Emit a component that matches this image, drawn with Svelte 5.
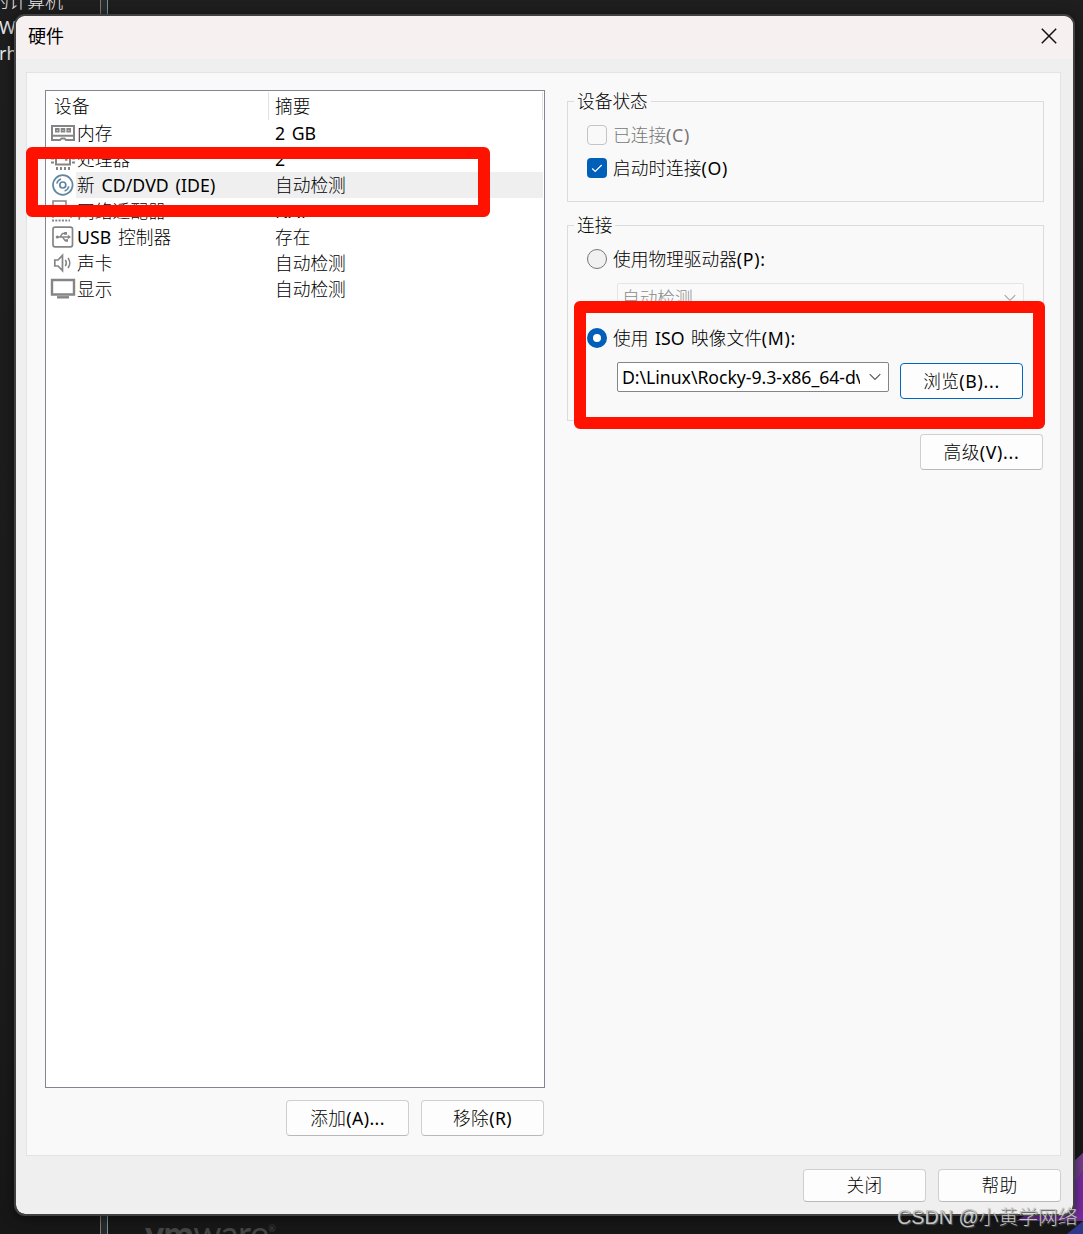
<script>
	const devices = [
		{ icon: 'memory', name: '内存', summary: '2 GB' },
		{ icon: 'cpu', name: '处理器', summary: '2' },
		{ icon: 'disc', name: '新 CD/DVD (IDE)', summary: '自动检测' },
		{ icon: 'network', name: '网络适配器', summary: 'NAT' },
		{ icon: 'usb', name: 'USB 控制器', summary: '存在' },
		{ icon: 'sound', name: '声卡', summary: '自动检测' },
		{ icon: 'display', name: '显示', summary: '自动检测' }
	];

	let selected = 2;
	let connected = false;
	let connectAtStart = true;
	let source = 'iso';
	let isoPath = 'D:\\Linux\\Rocky-9.3-x86_64-dvd.iso';
</script>

<div class="desktop">
	<div class="tree">
		<div>的计算机</div>
		<div>W</div>
		<div>rh</div>
	</div>
	<div class="splitter"></div>
	<svg class="wallpaper" width="67" height="84" viewBox="0 0 67 84">
		<path d="M57 12 67 3V71H0L11 64H57z" fill="#742ca0" />
		<path d="M57 12 67 3V20L57 34z" fill="#713f8c" />
		<path d="M51 84 67 71V84z" fill="#30388b" />
	</svg>
	<div class="brand"><b>vm</b>ware<sup>®</sup></div>

	<div class="dialog">
		<header>
			<span>硬件</span>
			<svg width="16" height="16" viewBox="0 0 16 16">
				<path d="M.8.8 15.2 15.2M15.2.8.8 15.2" stroke="#111" stroke-width="1.5" fill="none" />
			</svg>
		</header>

		<div class="panel">
			<div class="left">
				<div class="list">
					<div class="row head">
						<span class="name">设备</span>
						<span class="summary">摘要</span>
					</div>
					{#each devices as device, index (index)}
						<div class="row" class:selected={index === selected} on:click={() => (selected = index)} role="presentation">
							<svg class="icon" width="26" height="26" viewBox="0 0 26 26" fill="none" stroke="#858585" stroke-width="1.5">
								{#if device.icon === 'memory'}
									<path d="M2 5.9H24V20.1H16L14.5 18.4H11.5L10 20.1H2zM2 15.8H24" stroke-width="2" />
									<path d="M5.9 9h2.8v2.6h-2.8zM11.6 9h2.8v2.6h-2.8zM17.3 9h2.8v2.6h-2.8z" stroke-width="1.8" />
								{:else if device.icon === 'cpu'}
									<path d="M6 4H20V18.5H6z" stroke-width="2" />
									<path d="M1 8.5H4M1 12.5H4M1 16.5H4M22 8.5H25M22 12.5H25M22 16.5H25M7 21V24M11 21V24M15 21V24M19 21V24" stroke-width="2" />
									<path d="M15 13.5H17.5" stroke-width="2.4" />
								{:else if device.icon === 'disc'}
									<g stroke="#6086a1">
										<circle cx="12.8" cy="13" r="9.8" stroke-width="1.7" />
										<circle cx="12.8" cy="13" r="3" stroke-width="1.7" />
										<path d="M6.8 11.6A6.3 6.3 0 0 1 11 7M18.8 14.4A6.3 6.3 0 0 1 14.6 19" />
									</g>
								{:else if device.icon === 'network'}
									<path d="M3 20V3H16V18M16 10H21V20" />
									<path d="M2 22.5H20" stroke-dasharray="2 1.3" stroke-width="1.8" />
								{:else if device.icon === 'usb'}
									<rect x="3" y="3.2" width="19.5" height="19.6" rx="2" stroke-width="1.7" />
									<path d="M7 13H20M10 13 12.5 9.5H15M12.5 13 15 16.5H17" stroke-width="1.3" />
									<circle cx="7.3" cy="13" r="1.6" fill="#858585" stroke="none" />
									<path d="M14.2 8h2.8v2.8h-2.8zM15.4 15.2h2.6v2.6h-2.6zM17.8 10.8 21 13 17.8 15.2z" fill="#858585" stroke="none" />
								{:else if device.icon === 'sound'}
									<path d="M4.8 10H8L12.5 5.3V20.7L8 16H4.8z" stroke-width="1.7" />
									<path d="M15.3 9.8Q17.4 13 15.3 16.2M18 8Q21.6 13 18 18" stroke-width="1.5" />
								{:else}
									<path d="M2 4H24V18.5H2z" stroke-width="2.4" />
									<path d="M7 21.3H19" stroke-width="2.4" />
								{/if}
							</svg>
							<span class="name">{device.name}</span>
							<span class="summary">{device.summary}</span>
						</div>
					{/each}
				</div>
				<div class="actions">
					<button>添加(A)...</button>
					<button>移除(R)</button>
				</div>
			</div>

			<div class="right">
				<section class="group status">
					<h2>设备状态</h2>
					<label class="disabled">
						<input type="checkbox" bind:checked={connected} disabled />
						<i class="box"></i>
						<span>已连接<b>(C)</b></span>
					</label>
					<label>
						<input type="checkbox" bind:checked={connectAtStart} />
						<i class="box" class:on={connectAtStart}>
							{#if connectAtStart}
								<svg width="20" height="20" viewBox="0 0 20 20">
									<path d="M5.2 10.5 8.2 13.5 14.7 7" stroke="#fff" stroke-width="1.2" fill="none" />
								</svg>
							{/if}
						</i>
						<span>启动时连接<b>(O)</b></span>
					</label>
				</section>

				<section class="group connection">
					<h2>连接</h2>
					<label>
						<input type="radio" bind:group={source} value="physical" />
						<i class="dot" class:on={source === 'physical'}></i>
						<span>使用物理驱动器<b>(P):</b></span>
					</label>
					<div class="combo off">
						<span>自动检测</span>
						<svg width="12" height="8" viewBox="0 0 12 8"><path d="M.7 1.2 6 6.5 11.3 1.2" /></svg>
					</div>
					<label class="iso">
						<input type="radio" bind:group={source} value="iso" />
						<i class="dot" class:on={source === 'iso'}></i>
						<span>使用 ISO 映像文件<b>(M):</b></span>
					</label>
					<div class="file">
						<div class="combo">
							<span>{isoPath}</span>
							<svg width="12" height="8" viewBox="0 0 12 8"><path d="M.7 1.2 6 6.5 11.3 1.2" /></svg>
						</div>
						<button class="focus">浏览<b>(B)...</b></button>
					</div>
				</section>
				<button class="advanced">高级<b>(V)...</b></button>
			</div>
		</div>

		<footer>
			<button>关闭</button>
			<button>帮助</button>
		</footer>
	</div>

	<div class="mark mark-device"></div>
	<div class="mark mark-iso"></div>
	<div class="watermark">CSDN @小黄学网络</div>
</div>

<style>
	:global(body) {
		margin: 0;
		background: #1b1b1b;
	}
	.desktop {
		position: relative;
		width: 1083px;
		height: 1234px;
		overflow: hidden;
		background: linear-gradient(#1e1e1e, #1b1b1b 80%, #171717);
		font-family: 'Noto Sans', 'Noto Sans CJK SC Light', 'Noto Sans CJK SC', sans-serif;
		font-size: 17.7px;
		line-height: 26px;
		color: #000;
	}
	.tree {
		position: absolute;
		left: -9px;
		top: -12px;
		font-size: 18px;
		color: #e8e8e8;
	}
	.tree div:nth-child(n + 2) {
		padding-left: 8px;
	}
	.splitter {
		position: absolute;
		left: 100px;
		top: 0;
		width: 6px;
		height: 1234px;
		background: #2a2a2a;
		border-left: 1px solid #777;
		border-right: 1px solid #6995a5;
	}
	.wallpaper {
		position: absolute;
		right: 0;
		bottom: 0;
	}
	.brand {
		position: absolute;
		left: 145px;
		top: 1214px;
		font-family: Lato, sans-serif;
		font-size: 36px;
		line-height: 38px;
		letter-spacing: -0.6px;
		color: #454545;
	}
	.brand b {
		font-weight: 900;
	}
	.brand sup {
		font-size: 9px;
		vertical-align: 15px;
		line-height: 0;
	}
	.dialog {
		position: absolute;
		left: 14px;
		top: 14px;
		width: 1057px;
		height: 1198px;
		display: flex;
		flex-direction: column;
		background: #efefef;
		border: 2px solid #414141;
		border-radius: 11px;
		background-clip: padding-box;
		overflow: hidden;
		box-shadow: 0 2px 12px #0008;
	}
	header {
		height: 43px;
		box-sizing: border-box;
		display: flex;
		align-items: center;
		justify-content: space-between;
		padding: 0 16px 3px 12px;
		background: #f7f0f0;
		font-family: 'Noto Sans', 'Noto Sans CJK SC', sans-serif;
		font-size: 18px;
	}
	.panel {
		display: flex;
		box-sizing: border-box;
		width: 1035px;
		height: 1084px;
		margin: 13px 0 0 10px;
		padding: 17px 16px 0 18px;
		border: 1px solid #e3e3e3;
		background: #f9f9f9;
	}
	.left {
		width: 500px;
		margin-right: 22px;
	}
	.list {
		box-sizing: border-box;
		height: 998px;
		padding: 1px;
		border: 1px solid #858591;
		background: #fff;
	}
	.row {
		display: flex;
		height: 26px;
		padding-left: 3px;
		white-space: nowrap;
		word-spacing: 2px;
	}
	.row .icon {
		flex: none;
	}
	.row .name {
		width: 199px;
		box-sizing: border-box;
		padding-left: 1px;
		letter-spacing: 0.08px;
	}
	.row .summary {
		flex: 1;
	}
	.row.head {
		height: 28px;
		line-height: 29px;
		padding: 0;
		border-right: 1px solid #e2e2e2;
	}
	.head .name {
		width: 222px;
		padding-left: 7px;
		border-right: 1px solid #e2e2e2;
	}
	.head .summary {
		padding-left: 6px;
	}
	.selected {
		background: linear-gradient(90deg, #fff 29px, #efefef 29px);
	}
	.actions {
		display: flex;
		justify-content: flex-end;
		gap: 12px;
		padding: 12px 1px 0 0;
	}
	button {
		flex: none;
		box-sizing: border-box;
		width: 123px;
		height: 36px;
		padding: 0;
		border: 1px solid #cfcfcf;
		border-bottom-color: #b9b9b9;
		border-radius: 4px;
		background: #fdfdfd;
		font: inherit;
		line-height: 34px;
		letter-spacing: 0.4px;
		color: #000;
	}
	button b,
	label b {
		font-weight: 400;
		letter-spacing: 0.7px;
	}
	button.focus {
		border-color: #0067c0;
	}
	.right {
		width: 477px;
		display: flex;
		flex-direction: column;
	}
	.group {
		box-sizing: border-box;
		border: 1px solid #dcdcdc;
	}
	.status {
		height: 101px;
		margin-top: 11px;
	}
	.connection {
		height: 196px;
		margin-top: 23px;
	}
	h2 {
		width: max-content;
		margin: -14px 0 0 6px;
		padding: 0 3px;
		background: #f9f9f9;
		font-size: inherit;
		font-weight: 400;
		line-height: 26px;
	}
	label {
		display: flex;
		align-items: center;
		gap: 6px;
		height: 26px;
		margin: 8px 0 0 19px;
		white-space: nowrap;
		word-spacing: 2px;
	}
	label + label {
		margin-top: 7px;
	}
	label.disabled {
		color: #777;
	}
	input {
		display: none;
	}
	.box,
	.dot {
		box-sizing: border-box;
		width: 20px;
		height: 20px;
		border: 1px solid #c4c4c4;
		border-radius: 4px;
	}
	.box.on {
		border: 0;
		background: #005fb8;
	}
	.box svg {
		display: block;
	}
	.dot {
		border-color: #777;
		border-radius: 50%;
		background: #f1f1f1;
	}
	.dot.on {
		border: 6px solid #005fb8;
		background: #fff;
	}
	.combo {
		box-sizing: border-box;
		width: 272px;
		height: 30px;
		display: flex;
		align-items: center;
		gap: 9px;
		padding: 0 7px 0 4px;
		border: 1px solid #858585;
		border-radius: 2px;
		background: #fff;
	}
	.combo span {
		flex: 1;
		min-width: 0;
		overflow: hidden;
		white-space: nowrap;
		letter-spacing: -0.05px;
	}
	.combo path {
		fill: none;
		stroke: #5a5a5a;
		stroke-width: 1.2;
	}
	.combo.off {
		width: 407px;
		margin: 11px 0 0 49px;
		border-color: #e5e5e5;
		background: #fafafa;
		color: #8a8a8a;
	}
	.combo.off path {
		stroke: #aaa;
	}
	label.iso {
		margin-top: 12px;
	}
	.file {
		display: flex;
		gap: 11px;
		margin: 11px 0 0 49px;
	}
	.file button {
		margin-top: 1px;
	}
	.advanced {
		align-self: flex-end;
		margin: 13px 1px 0 0;
	}
	footer {
		display: flex;
		justify-content: flex-end;
		gap: 12px;
		padding: 13px 12px 0 0;
	}
	footer button {
		height: 33px;
		line-height: 31px;
	}
	.mark {
		position: absolute;
		box-sizing: border-box;
		border: 12px solid #ff1200;
		border-radius: 6px;
	}
	.mark-device {
		left: 26px;
		top: 147px;
		width: 464px;
		height: 70px;
	}
	.mark-iso {
		left: 574px;
		top: 301px;
		width: 471px;
		height: 128px;
	}
	.watermark {
		position: absolute;
		left: 897px;
		top: 1204px;
		font-family: 'Liberation Sans', 'Noto Sans CJK SC Light', 'Noto Sans CJK SC', sans-serif;
		font-size: 19.8px;
		white-space: nowrap;
		color: #c4c4c4;
		text-shadow: 1px 1px 1px #555;
	}
</style>
